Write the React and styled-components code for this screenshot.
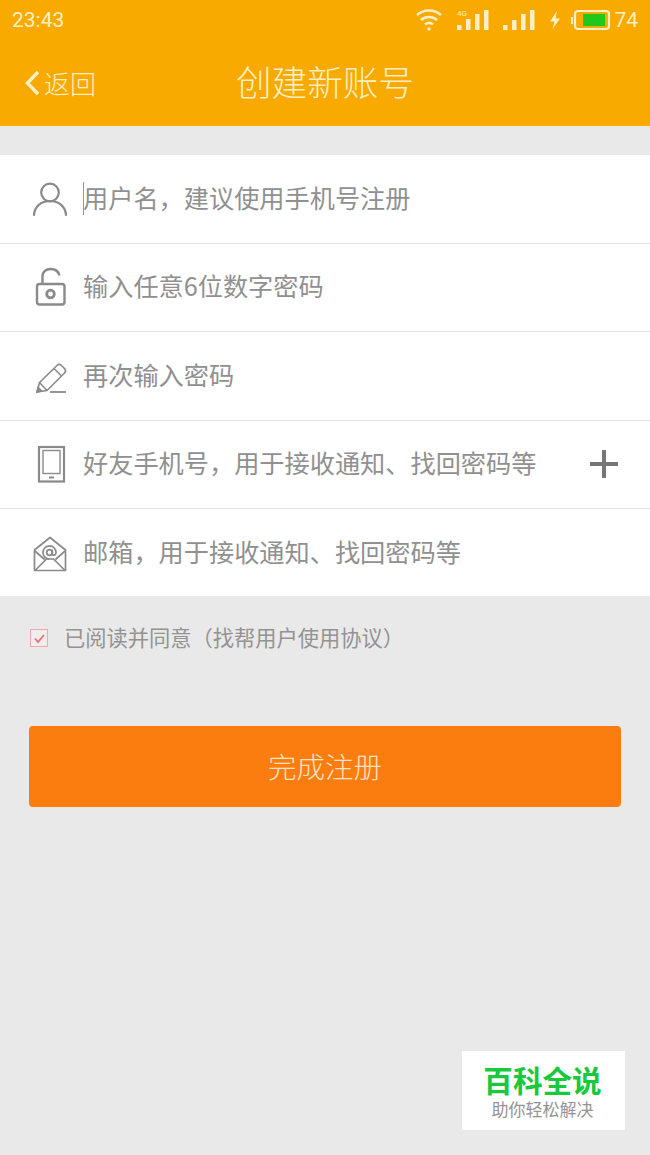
import React from "react";
import styled, { createGlobalStyle } from "styled-components";

const GlobalStyle = createGlobalStyle`
  html, body {
    margin: 0;
    padding: 0;
    background: #e9e9e9;
    font-family: "Noto Sans CJK SC", "Noto Sans", sans-serif;
    text-spacing-trim: space-all;
  }
`;

const Page = styled.div`
  position: relative;
  width: 650px;
  height: 1155px;
  overflow: hidden;
  background: #e9e9e9;
`;

const TopArea = styled.header`
  height: 126px;
  background: #f8aa00;
  color: #fcefc4;
`;

const StatusBar = styled.div`
  height: 40px;
  padding: 0 12px;
  display: flex;
  align-items: center;
  justify-content: space-between;
  font-family: Roboto, sans-serif;
  font-size: 21px;
`;

const StatusIcons = styled.div`
  display: flex;
  align-items: center;
  gap: 12px;
`;

const Level = styled.span`
  margin-left: -9px;
`;

const BatterySvg = styled.svg`
  margin-left: -5px;
`;

const NavBar = styled.div`
  position: relative;
  height: 86px;
  display: flex;
  align-items: center;
  justify-content: center;
`;

const Back = styled.div`
  position: absolute;
  left: 24px;
  top: 24px;
  display: flex;
  align-items: center;
  gap: 2px;
  font-size: 26px;
  line-height: 38px;
  font-weight: 300;
`;

const Title = styled.h1`
  margin: 0;
  font-size: 35.6px;
  font-weight: 300;
  line-height: 50px;
  padding-bottom: 4px;
`;

const Form = styled.div`
  margin-top: 29px;
  background: #fff;
`;

const Row = styled.div`
  height: ${(p) => (p.$last ? "87px" : "88.5px")};
  box-sizing: border-box;
  display: flex;
  align-items: center;
  padding: 0 30px;
  border-bottom: ${(p) => (p.$last ? "0" : "1px solid #e4e4e4")};
`;

const IconSlot = styled.div`
  width: 40px;
  height: 40px;
  margin-right: 13px;
  flex: none;
  color: #8a8a8a;
`;

const Caret = styled.span`
  width: 1px;
  height: 33px;
  margin-right: -1px;
  background: #999;
`;

const Hint = styled.span`
  flex: 1;
  font-size: 25.2px;
  color: #909090;
  line-height: 36px;
  padding-bottom: 4px;
  white-space: nowrap;
`;

const AddButton = styled.div`
  position: relative;
  width: 28px;
  height: 28px;
  margin-right: 2px;
  flex: none;
  &::before,
  &::after {
    content: "";
    position: absolute;
    background: #767676;
  }
  &::before {
    left: 0;
    right: 0;
    top: 12px;
    height: 4px;
  }
  &::after {
    top: 0;
    bottom: 0;
    left: 12px;
    width: 4px;
  }
`;

const Agree = styled.div`
  display: flex;
  align-items: center;
  margin-top: 28px;
  padding-left: 30px;
  height: 30px;
`;

const CheckBox = styled.div`
  width: 18px;
  height: 18px;
  box-sizing: border-box;
  margin-right: 16px;
  margin-top: -2px;
  border: 1.5px solid #efa9ae;
  background: #f2eced;
  display: flex;
  align-items: center;
  justify-content: center;
`;

const AgreeText = styled.span`
  font-size: 21.25px;
  color: #939393;
  line-height: 30px;
  padding-bottom: 4px;
  white-space: nowrap;
`;

const Submit = styled.button`
  display: block;
  width: 592px;
  height: 81px;
  margin: 72px 0 0 29px;
  padding: 0 0 2px;
  border: 0;
  border-radius: 4px;
  background: #fb7d10;
  color: #fbe3c6;
  font-family: inherit;
  font-size: 28.5px;
  font-weight: 300;
`;

const Badge = styled.div`
  position: absolute;
  left: 462px;
  top: 1051px;
  width: 163px;
  height: 79px;
  box-sizing: border-box;
  padding: 2px 2px 0 0;
  background: #fff;
  display: flex;
  flex-direction: column;
  align-items: center;
  justify-content: center;
  gap: 4px;
`;

const BadgeName = styled.div`
  font-size: 29.6px;
  font-weight: 700;
  line-height: 30px;
  color: #18c93d;
`;

const BadgeSlogan = styled.div`
  font-size: 17px;
  line-height: 20px;
  color: #949494;
`;

const Wifi = () => (
  <svg width="30" height="26" viewBox="0 0 30 26" fill="none" stroke="#fcefc4" strokeWidth="2.6">
    <path d="M3 8c7-6 17-6 24 0" />
    <path d="M7 13c4.500-4 11.500-4 16 0" />
    <path d="M11 17.500c2.500-2 5.500-2 8 0" />
    <circle cx="15" cy="22" r="1.800" fill="#fcefc4" stroke="none" />
  </svg>
);

const Signal = ({ small }) => (
  <svg width="34" height="24" viewBox="0 0 34 24" fill="#fcefc4">
    {small && (
      <text x="1" y="8" fontSize="8" fontFamily="Roboto, sans-serif">
        4G
      </text>
    )}
    <rect x="1" y="17" width="4.500" height="5" />
    <rect x="10" y={small ? 11 : 12} width="4.500" height={small ? 11 : 10} />
    <rect x="19" y="6" width="4.500" height="16" />
    <rect x="28" y="2" width="4.500" height="20" />
  </svg>
);

const Bolt = () => (
  <svg width="14" height="20" viewBox="0 0 14 20" fill="#fcefc4">
    <path d="M9 1 2 11.500h4.500L4.500 19 12 8.500H7.500z" />
  </svg>
);

const Battery = () => (
  <BatterySvg width="42" height="24" viewBox="0 0 42 24" fill="none">
    <path d="M3 9v7" stroke="#fcefc4" strokeWidth="2" />
    <rect x="6" y="3" width="34" height="18" rx="3" stroke="#fcefc4" strokeWidth="2.200" />
    <rect x="14" y="6" width="22" height="12" fill="#22c71c" />
  </BatterySvg>
);

const Chevron = () => (
  <svg width="18" height="26" viewBox="0 0 18 26" fill="none" stroke="#fcefc4" strokeWidth="3.400">
    <path d="M14 2 3.500 13 14 24" />
  </svg>
);

const UserIcon = () => (
  <svg width="40" height="40" viewBox="0 0 40 40" fill="none" stroke="currentColor" strokeWidth="2.200">
    <circle cx="20" cy="13.500" r="8.800" />
    <path d="M4 36c.5-8.500 7-14 16-14s15.500 5.500 16 14" strokeLinecap="round" />
  </svg>
);

const LockIcon = () => (
  <svg width="40" height="40" viewBox="0 0 40 40" fill="none" stroke="currentColor" strokeWidth="2.400">
    <rect x="7" y="17" width="27.500" height="20.500" rx="2.500" />
    <circle cx="20.500" cy="27" r="3.800" strokeWidth="2.800" />
    <path d="M12.500 17v-8c0-4 3.500-7 8-7s8 2.500 9 6.500" />
  </svg>
);

const PencilIcon = () => (
  <svg width="40" height="40" viewBox="0 0 40 40" fill="none" stroke="currentColor" strokeWidth="1.600">
    <path d="M7 36l2.500-9.500L27 9.500c1.500-1.500 3-1.500 4.500 0l3 3c1.500 1.500 1.500 3 0 4.500L17 34.500z" strokeLinejoin="round" />
    <path d="m24 12.500 7.500 7.500M9.500 26.500l7.500 8" />
    <path d="m7 36 1.200-4.500 3.300 3.300z" fill="currentColor" />
    <path d="M20 36h16" strokeWidth="1.800" />
  </svg>
);

const TabletIcon = () => (
  <svg width="40" height="40" viewBox="0 0 40 40" fill="none" stroke="currentColor" strokeWidth="2.200">
    <rect x="9" y="3" width="25" height="34.500" />
    <rect x="13" y="6.500" width="17" height="23" strokeWidth="1.400" />
    <path d="M19 33.500h5" strokeWidth="2" />
  </svg>
);

const MailIcon = () => (
  <svg width="40" height="40" viewBox="0 0 40 40" fill="none" stroke="currentColor" strokeWidth="1.700">
    <path d="M4.500 17 20 4.500 35.500 17v20.500h-31z" strokeLinejoin="round" />
    <path d="m5 37.500 11.500-11.500h7L35 37.500M5 18l9.500 8.500M35 18l-9.500 8.500" />
    <circle cx="19.500" cy="19.500" r="2.800" />
    <path d="M22.300 16.700v4c0 2.300 3.700 2 3.700-1.200 0-3.800-2.900-6.700-6.500-6.700S13 15.700 13 19.500s2.900 6.500 6.500 6.500" />
  </svg>
);

const rows = [
  { icon: <UserIcon />, text: "用户名，建议使用手机号注册", caret: true },
  { icon: <LockIcon />, text: "输入任意6位数字密码" },
  { icon: <PencilIcon />, text: "再次输入密码" },
  { icon: <TabletIcon />, text: "好友手机号，用于接收通知、找回密码等", add: true },
  { icon: <MailIcon />, text: "邮箱，用于接收通知、找回密码等", last: true },
];

export default function App() {
  return (
    <Page>
      <GlobalStyle />
      <TopArea>
        <StatusBar>
          <span>23:43</span>
          <StatusIcons>
            <Wifi />
            <Signal small />
            <Signal />
            <Bolt />
            <Battery />
            <Level>74</Level>
          </StatusIcons>
        </StatusBar>
        <NavBar>
          <Back>
            <Chevron />
            返回
          </Back>
          <Title>创建新账号</Title>
        </NavBar>
      </TopArea>
      <Form>
        {rows.map((row) => (
          <Row key={row.text} $last={row.last}>
            <IconSlot>{row.icon}</IconSlot>
            {row.caret && <Caret />}
            <Hint>{row.text}</Hint>
            {row.add && <AddButton />}
          </Row>
        ))}
      </Form>
      <Agree>
        <CheckBox>
          <svg width="13" height="13" viewBox="0 0 13 13" fill="none" stroke="#e8707a" strokeWidth="1.800">
            <path d="m2 6.500 3 3.500 6-7" />
          </svg>
        </CheckBox>
        <AgreeText>已阅读并同意（找帮用户使用协议）</AgreeText>
      </Agree>
      <Submit>完成注册</Submit>
      <Badge>
        <BadgeName>百科全说</BadgeName>
        <BadgeSlogan>助你轻松解决</BadgeSlogan>
      </Badge>
    </Page>
  );
}
